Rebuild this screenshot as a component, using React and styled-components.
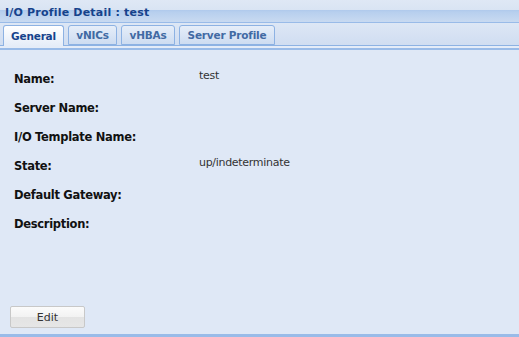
import React from 'react';
import styled, { createGlobalStyle } from 'styled-components';

const GlobalStyle = createGlobalStyle`
  html, body {
    margin: 0;
    padding: 0;
    background: #dfe8f6;
  }
  body {
    font-family: Tahoma, "DejaVu Sans", Verdana, sans-serif;
  }
`;

const Panel = styled.div`
  width: 519px;
  height: 337px;
  display: flex;
  flex-direction: column;
  background: #dfe8f6;
  border-bottom: 3px solid #99bbe8;
  box-sizing: border-box;
`;

const Header = styled.div`
  height: 23px;
  border-bottom: 1px solid #99bbe8;
  background: linear-gradient(#dfe8f5 0, #d9e4f3 10px, #afc9ec 10px, #b7cfee 12px, #cadbf1 23px);
  display: flex;
  align-items: center;
  padding-left: 5px;
  padding-top: 3px;
  box-sizing: border-box;
`;

const HeaderTitle = styled.span`
  font-family: "DejaVu Sans", Verdana, sans-serif;
  font-size: 11px;
  font-weight: bold;
  color: #15428b;
  letter-spacing: 0.2px;
`;

const TabStrip = styled.div`
  height: 22px;
  display: flex;
  align-items: flex-end;
  gap: 4px;
  padding-left: 3px;
  background: linear-gradient(#dde7f5, #d0ddf1);
  border-bottom: 1px solid #8db2e3;
`;

const Tab = styled.div`
  width: ${(p) => p.$w}px;
  height: ${(p) => (p.$active ? '21px' : '20px')};
  margin-bottom: ${(p) => (p.$active ? '-1px' : '0')};
  box-sizing: border-box;
  display: flex;
  align-items: center;
  justify-content: center;
  border: 1px solid #8db2e3;
  border-bottom: ${(p) => (p.$active ? 'none' : '1px solid #8db2e3')};
  border-radius: 3px 3px 0 0;
  background: ${(p) =>
    p.$active
      ? 'linear-gradient(#ffffff, #e4ecf8)'
      : 'linear-gradient(#e6eef9, #cddcf1)'};
  font-family: "DejaVu Sans", Verdana, sans-serif;
  font-size: 10.5px;
  font-weight: bold;
  color: ${(p) => (p.$active ? '#15428b' : '#416aa3')};
  letter-spacing: -0.2px;
`;

const StripBase = styled.div`
  height: 4px;
  background: linear-gradient(#e4ecf8 0, #e4ecf8 2px, #99bbe8 2px, #99bbe8 4px);
`;

const Body = styled.div`
  flex: 1;
  display: flex;
  flex-direction: column;
  padding: 19px 14px 0 14px;
`;

const Fields = styled.div`
  display: grid;
  grid-template-columns: 185px 1fr;
  grid-auto-rows: 29px;
`;

const Label = styled.div`
  font-family: "DejaVu Sans", Verdana, sans-serif;
  font-size: 11.5px;
  font-weight: bold;
  color: #111;
  letter-spacing: -0.3px;
  padding-top: 3px;
`;

const Value = styled.div`
  font-family: "DejaVu Sans", Verdana, sans-serif;
  font-size: 11px;
  color: #333;
  letter-spacing: -0.3px;
`;

const Footer = styled.div`
  margin-top: auto;
  padding: 0 0 6px 0;
  margin-left: -4px;
`;

const Button = styled.button`
  width: 75px;
  height: 22px;
  border: 1px solid #c8c8c8;
  border-radius: 2px;
  background: linear-gradient(#fbfbfb 0, #f2f2f2 50%, #e3e3e3 50%, #e6e6e6 100%);
  font-family: "DejaVu Sans", Verdana, sans-serif;
  font-size: 11px;
  color: #333;
  padding: 0;
  cursor: pointer;
`;

const tabs = [
  { label: 'General', w: 61, active: true },
  { label: 'vNICs', w: 49 },
  { label: 'vHBAs', w: 54 },
  { label: 'Server Profile', w: 96 },
];

const fields = [
  ['Name:', 'test'],
  ['Server Name:', ''],
  ['I/O Template Name:', ''],
  ['State:', 'up/indeterminate'],
  ['Default Gateway:', ''],
  ['Description:', ''],
];

const App = () => {
  return (
    <>
      <GlobalStyle />
      <Panel>
        <Header>
          <HeaderTitle>I/O Profile Detail : test</HeaderTitle>
        </Header>
        <TabStrip>
          {tabs.map((t) => (
            <Tab key={t.label} $active={t.active} $w={t.w}>
              {t.label}
            </Tab>
          ))}
        </TabStrip>
        <StripBase />
        <Body>
          <Fields>
            {fields.map(([label, value]) => (
              <React.Fragment key={label}>
                <Label>{label}</Label>
                <Value>{value}</Value>
              </React.Fragment>
            ))}
          </Fields>
          <Footer>
            <Button>Edit</Button>
          </Footer>
        </Body>
      </Panel>
    </>
  );
};

export default App;
